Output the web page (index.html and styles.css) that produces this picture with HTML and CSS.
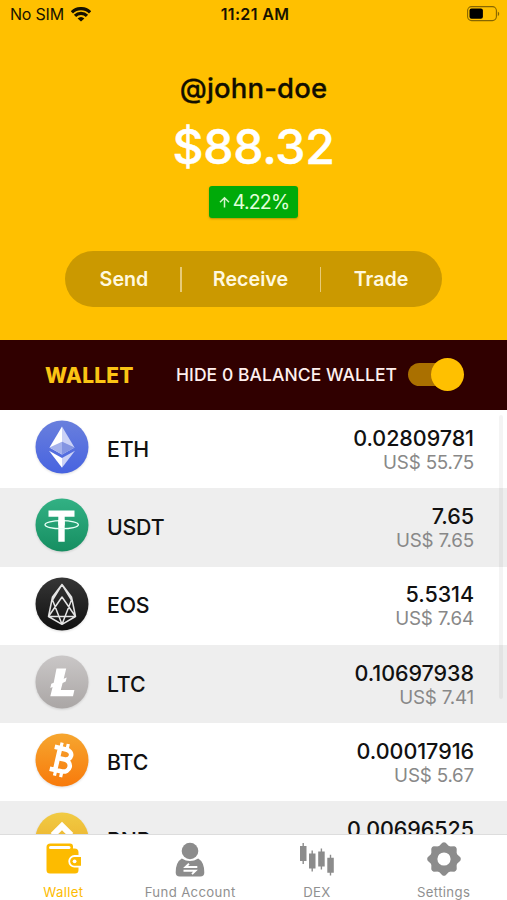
FILE: index.html
```html
<!DOCTYPE html>
<html lang="en">
<head>
<meta charset="utf-8">
<title>Wallet</title>
<link rel="stylesheet" href="styles.css">
</head>
<body>
<div class="app">
  <header class="hero">
    <div class="status">
      <div class="carrier"><span>No SIM</span>
        <svg width="20" height="15" viewBox="0 0 20 15" fill="none" stroke="#171200" stroke-width="3.2"><path d="M.9 5.300A13 13 0 0 1 19.100 5.300M4 8.900A8.500 8.500 0 0 1 16 8.900"/><path d="M10 14.600 6.600 11.400A4.600 4.600 0 0 1 13.400 11.400Z" fill="#171200" stroke="none"/></svg>
      </div>
      <div class="time">11:21 AM</div>
      <svg class="battery" width="33" height="16" viewBox="0 0 33 16"><rect x=".6" y=".6" width="28.800" height="14" rx="4" fill="none" stroke="#876600" stroke-width="1.1"/><rect x="2.500" y="2.500" width="13.400" height="10.200" rx="2" fill="#000"/><path d="M30.800 5.400c1.900.8 1.900 3.800 0 4.600z" fill="#876600"/></svg>
    </div>
    <div class="user">@john-doe</div>
    <div class="total">$88.32</div>
    <div class="change"><svg width="13" height="13" viewBox="0 0 13 13" fill="none" stroke="#d4f5cd" stroke-width="1.5"><path d="M6.500 11.500V1.800M2 6.200l4.500-4.400L11 6.200"/></svg><span>4.22%</span></div>
    <div class="actions"><span class="send">Send</span><i></i><span class="receive">Receive</span><i></i><span class="trade">Trade</span></div>
  </header>
  <section class="filter">
    <span class="heading">WALLET</span>
    <span class="hide">HIDE 0 BALANCE WALLET</span>
    <span class="toggle"><b></b></span>
  </section>
  <main class="list">
    <div class="row">
      <svg class="coin" viewBox="0 0 54 54"><defs><linearGradient id="eth" x2="0" y2="1"><stop stop-color="#697fdd"/><stop offset="1" stop-color="#4763e0"/></linearGradient></defs><circle cx="27" cy="27" r="26.5" fill="url(#eth)"/><path d="M27 6.500 14.500 27.500 27 34.500z" fill="#fff"/><path d="M27 6.500 39.500 27.500 27 34.500z" fill="#cbd2f6"/><path d="M14.500 27.500 27 21.800 39.500 27.500 27 34.500z" fill="#a5b2ec"/><path d="M27 21.800v12.700l12.500-7z" fill="#8495e2"/><path d="M14 30.800 27 38v9.800z" fill="#fff"/><path d="M40 30.800 27 38v9.800z" fill="#cbd2f6"/></svg>
      <span class="name">ETH</span><div class="amounts"><strong>0.02809781</strong><small>US$ 55.75</small></div>
    </div>
    <div class="row">
      <svg class="coin" viewBox="0 0 54 54"><defs><linearGradient id="usdt" x2="0" y2="1"><stop stop-color="#32b184"/><stop offset="1" stop-color="#168e61"/></linearGradient></defs><circle cx="27" cy="27" r="26.5" fill="url(#usdt)"/><path d="M13.500 12.500h26v6.200h-9.800v25h-6.400v-25h-9.800z" fill="#fff"/><ellipse cx="26.700" cy="26.700" rx="16.700" ry="4" fill="none" stroke="#e9fff7" stroke-width="1.3"/><path d="M23.300 21.800h6.400v5.600h-6.400z" fill="#fff"/></svg>
      <span class="name">USDT</span><div class="amounts"><strong>7.65</strong><small>US$ 7.65</small></div>
    </div>
    <div class="row">
      <svg class="coin" viewBox="0 0 54 54"><defs><linearGradient id="eos" x2="0" y2="1"><stop stop-color="#363636"/><stop offset="1" stop-color="#101010"/></linearGradient></defs><circle cx="27" cy="27" r="26.5" fill="url(#eos)"/><path d="M27 7.500 17.500 20 13.500 39.500 27 47.300 40.500 39.500 36.500 20zM27 7.500 17.500 23 27 47.300 36.500 23zM27 20 13.500 39.500H40.500z" fill="none" stroke="#e4e4e4" stroke-width="1.5" stroke-linejoin="round"/></svg>
      <span class="name">EOS</span><div class="amounts"><strong>5.5314</strong><small>US$ 7.64</small></div>
    </div>
    <div class="row">
      <svg class="coin" viewBox="0 0 54 54"><defs><linearGradient id="ltc" x2="0" y2="1"><stop stop-color="#cac7c7"/><stop offset="1" stop-color="#aaa6a5"/></linearGradient></defs><circle cx="27" cy="27" r="26.5" fill="url(#ltc)"/><path d="M21.500 13.500h9.700l-2.500 10.200 3-1.100-1 4-3.100 1.300-1.800 7.200h13.600L38 41.300H15.300l2.300-9.200-2.300.8 1-4.200 2.400-1z" fill="#fff"/></svg>
      <span class="name">LTC</span><div class="amounts"><strong>0.10697938</strong><small>US$ 7.41</small></div>
    </div>
    <div class="row">
      <svg class="coin" viewBox="0 0 54 54"><defs><linearGradient id="btc" x2="0" y2="1"><stop stop-color="#f6a62f"/><stop offset="1" stop-color="#f87a0b"/></linearGradient></defs><circle cx="27" cy="27" r="26.5" fill="url(#btc)"/><g transform="rotate(13 27 27)" fill="none" stroke="#fff"><path d="M22.500 15.800v22.400M17 15.800h11.500c8.500 0 8.500 10.200 0 10.200h-6M28.500 26c10 0 10 12.200 0 12.200H17" stroke-width="4.6"/><path d="M23.200 10v6M29.500 10v6M23.200 38v6M29.500 38v6" stroke-width="3.2"/></g></svg>
      <span class="name">BTC</span><div class="amounts"><strong>0.00017916</strong><small>US$ 5.67</small></div>
    </div>
    <div class="row">
      <svg class="coin" viewBox="0 0 54 54"><defs><linearGradient id="bnb" x2="0" y2="1"><stop stop-color="#f1cb43"/><stop offset="1" stop-color="#eaa625"/></linearGradient></defs><circle cx="27" cy="27" r="26.5" fill="url(#bnb)"/><path d="m27 9.800 11.300 11.300-4.200 4.200L27 18.200l-7.100 7.100-4.200-4.200zM27 43.700 15.700 32.400l4.200-4.200 7.100 7.200 7.100-7.200 4.200 4.200zM27 22.800l4.200 4.200-4.200 4.200-4.200-4.200z" fill="#fff"/></svg>
      <span class="name">BNB</span><div class="amounts"><strong>0.00696525</strong></div>
    </div>
    <div class="scrollbar"></div>
  </main>
  <nav class="tabs">
    <div class="tab active">
      <svg width="35" height="34" viewBox="0 0 35 34"><path d="M4.500 1.500h19.500q3 0 3 3V6.500h1.500q4 0 4 4V28q0 3.500-3.500 3.500H4q-3.500 0-3.500-3.500V5q0-3.500 4-3.500z" fill="#fdbb00"/><rect x="3" y="4" width="21.500" height="3" rx="1.500" fill="#fff"/><path d="M35 14h-6.500a5.300 5.300 0 0 0 0 10.600H35" fill="#fdbb00" stroke="#fff" stroke-width="1.800"/><circle cx="28.600" cy="19.300" r="1.900" fill="#fff"/></svg>
      <span>Wallet</span>
    </div>
    <div class="tab">
      <svg width="30" height="36" viewBox="0 0 30 36"><circle cx="15" cy="9" r="8.300" fill="#8c8c8c"/><path d="M6.800 16.500Q15 21.500 23.200 16.500 29.300 20 29.300 30.500q0 4-4 4H4.700q-4 0-4-4Q.7 20 6.800 16.500z" fill="#8c8c8c"/><path d="M22.300 25H10.500l3.500-3.300M8.500 28.800h12L17 32.100" fill="none" stroke="#fff" stroke-width="1.900"/></svg>
      <span>Fund Account</span>
    </div>
    <div class="tab">
      <svg width="36" height="34" viewBox="0 0 36 34"><path d="M1 4h6.500v15H1zM10 11.500h6.500v15H10zM19.200 9.500h6.500v15h-6.500zM28.300 15.800h6.500v15h-6.500z" fill="#8c8c8c"/><path d="M4.200 1v21M13.200 8.500v21M22.400 6.500v21M31.500 12.800v20.700" stroke="#8c8c8c" stroke-width="1.400"/></svg>
      <span>DEX</span>
    </div>
    <div class="tab">
      <svg width="34" height="34" viewBox="-17 -17 34 34"><g fill="#8c8c8c"><circle r="13.700"/><g id="teeth"><path id="cog" d="M-5.800-12-1.700-16.300q1.700-1 3.400 0L5.800-12zM5.800 12 1.700 16.300q-1.700 1-3.400 0L-5.800 12z"/><use href="#cog" transform="rotate(90)"/></g><use href="#teeth" transform="rotate(45)"/></g><circle r="6.600" fill="#fff"/></svg>
      <span>Settings</span>
    </div>
  </nav>
</div>
</body>
</html>
```
FILE: styles.css
```css
* { box-sizing: border-box; }
body { margin: 0; font-family: Inter, "Liberation Sans", sans-serif; }
svg { display: block; flex: none; }
.app { width: 507px; height: 900px; display: flex; flex-direction: column; overflow: hidden; background: #fff; }
.hero { height: 340px; flex: none; background: #ffc000; display: flex; flex-direction: column; align-items: center; }
.status { width: 100%; height: 28px; padding: 0 7px 0 10px; display: grid; grid-template-columns: 1fr auto 1fr; align-items: center; color: #171200; }
.carrier { display: flex; align-items: center; gap: 7px; font-size: 16px; letter-spacing: -.2px; }
.time { font-size: 16px; font-weight: 600; letter-spacing: .35px; }
.battery { justify-self: end; }
.user { margin-top: 43px; height: 34px; line-height: 34px; font-size: 27.500px; font-weight: 500; letter-spacing: .15px; color: #120e00; -webkit-text-stroke: .3px #120e00; }
.total { margin-top: 12px; height: 60px; line-height: 60px; font-size: 48px; font-weight: 500; letter-spacing: -.2px; color: #fff; -webkit-text-stroke: .5px #fff; }
.change { margin-top: 9px; width: 89px; height: 32px; border-radius: 3px; background: #00aa09; box-shadow: 0 1px 2px #72720088; color: #e0ffda; display: flex; align-items: center; justify-content: center; gap: 2px; font-size: 19.500px; letter-spacing: -.8px; }
.actions { margin-top: 33px; width: 377px; height: 56px; border-radius: 28px; background: #cb9900; color: #fff8df; display: flex; align-items: center; font-size: 19.700px; font-weight: 600; text-align: center; }
.actions i { width: 1.500px; height: 25px; background: #e8cb78; }
.send { width: 115px; padding-left: 3px; }
.receive { width: 138px; }
.trade { width: 120px; }
.filter { height: 70px; flex: none; padding: 0 43px 0 45px; background: #300000; display: flex; align-items: center; color: #fff0ee; }
.heading { width: 131px; color: #fbc414; font-size: 21px; font-weight: 800; letter-spacing: .2px; }
.hide { width: 232px; font-size: 17.500px; font-weight: 500; letter-spacing: .06px; white-space: nowrap; position: relative; top: -1px; }
.toggle { width: 56px; height: 33px; display: flex; align-items: center; justify-content: flex-end; position: relative; top: -1px; }
.toggle::before { content: ""; width: 40px; height: 23px; margin-right: -17px; border-radius: 12px 0 0 12px; background: #aa7000; }
.toggle b { width: 33px; height: 33px; border-radius: 50%; background: #ffc000; position: relative; }
.list { position: relative; height: 424px; flex: none; overflow: hidden; }
.row { height: 78.300px; display: flex; align-items: center; padding: 0 33px 4px 35px; color: #111; }
.row:nth-child(even) { background: #eee; }
.coin { width: 54px; height: 54px; filter: drop-shadow(0 1px 1px #0002); }
.name { margin-left: 18px; padding-top: 3px; font-size: 21.300px; font-weight: 500; letter-spacing: -.2px; }
.amounts { margin-left: auto; padding-top: 4px; height: 53px; text-align: right; display: flex; flex-direction: column; }
.amounts strong { font-size: 21.500px; font-weight: 500; line-height: 26px; letter-spacing: -.05px; }
.amounts small { font-size: 18.800px; line-height: 23px; color: #888; letter-spacing: -.2px; }
.scrollbar { position: absolute; top: 5px; right: 4px; width: 4px; height: 284px; border-radius: 2px; background: #0000000b; }
.tabs { height: 66px; flex: none; border-top: 1px solid #ddd; background: #fff; display: grid; grid-template-columns: repeat(4, 1fr); }
.tab { height: 66px; display: flex; flex-direction: column; align-items: center; justify-content: space-between; padding: 7px 0 0; color: #909090; font-size: 13.200px; letter-spacing: .35px; }
.tab span { height: 16px; line-height: 16px; margin-bottom: 1px; }
.active { color: #fdbb00; }
```
